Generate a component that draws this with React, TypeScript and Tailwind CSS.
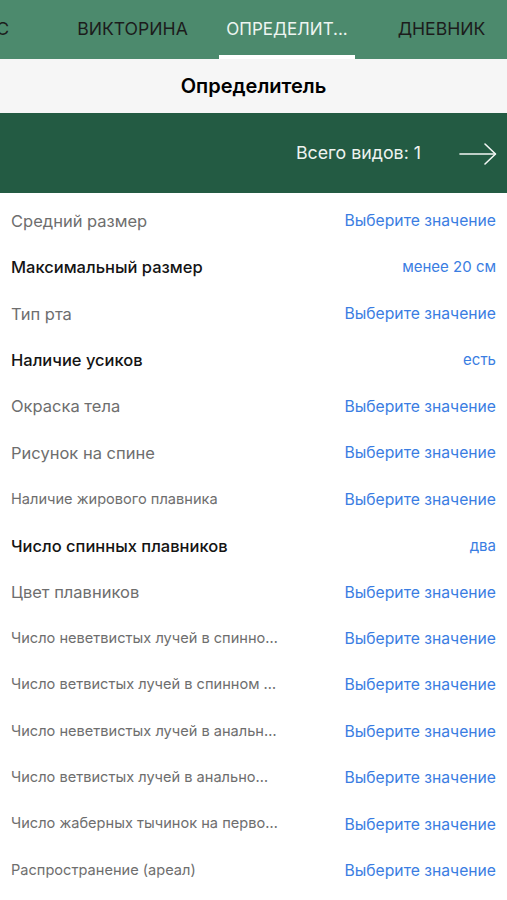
import React from "react";

type Row = { label: string; value: string; kind: "gray" | "black" | "small" };

const rows: Row[] = [
  { label: "Средний размер", value: "Выберите значение", kind: "gray" },
  { label: "Максимальный размер", value: "менее 20 см", kind: "black" },
  { label: "Тип рта", value: "Выберите значение", kind: "gray" },
  { label: "Наличие усиков", value: "есть", kind: "black" },
  { label: "Окраска тела", value: "Выберите значение", kind: "gray" },
  { label: "Рисунок на спине", value: "Выберите значение", kind: "gray" },
  { label: "Наличие жирового плавника", value: "Выберите значение", kind: "small" },
  { label: "Число спинных плавников", value: "два", kind: "black" },
  { label: "Цвет плавников", value: "Выберите значение", kind: "gray" },
  { label: "Число неветвистых лучей в спинном плавнике", value: "Выберите значение", kind: "small" },
  { label: "Число ветвистых лучей в спинном плавнике", value: "Выберите значение", kind: "small" },
  { label: "Число неветвистых лучей в анальном плавнике", value: "Выберите значение", kind: "small" },
  { label: "Число ветвистых лучей в анальном плавнике", value: "Выберите значение", kind: "small" },
  { label: "Число жаберных тычинок на первой жаберной дуге", value: "Выберите значение", kind: "small" },
  { label: "Распространение (ареал)", value: "Выберите значение", kind: "small" },
];

const tabs = ["КЛАСС", "ВИКТОРИНА", "ОПРЕДЕЛИТ...", "ДНЕВНИК"];

export default function App() {
  return (
    <div
      className="w-[507px] h-[900px] bg-white overflow-hidden"
      style={{ fontFamily: "Inter, 'Noto Sans', sans-serif" }}
    >
      {/* Tab bar */}
      <div className="h-[59px] bg-[#4c8a6d] overflow-hidden">
        <div className="flex ml-[-90px] gap-[18.5px] h-full">
          {tabs.map((t, i) => (
            <div key={i} className="relative w-[136px] shrink-0 h-full flex items-center justify-center">
              <span
                className={
                  "whitespace-nowrap " +
                  (i === 2 ? "text-[17px] text-[#eef5f1]" : "text-[17.6px] text-[#1c1c1c]")
                }
              >
                {t}
              </span>
              {i === 2 && <div className="absolute left-0 right-0 bottom-0 h-[4px] bg-white" />}
            </div>
          ))}
        </div>
      </div>

      {/* Title bar */}
      <div className="h-[54px] bg-[#f6f6f6] flex items-center justify-center">
        <span className="text-[20px] font-semibold text-black">Определитель</span>
      </div>

      {/* Banner */}
      <div className="h-[80px] bg-[#235b43] flex items-center justify-end pr-[10px]">
        <span className="text-[17.8px] text-[#eef3f0] mr-[38px]">Всего видов: 1</span>
        <svg width="38" height="24" viewBox="0 0 38 24" fill="none" className="mt-[1px]">
          <path d="M1 12 H36" stroke="#f2f6f4" strokeWidth="1.6" strokeLinecap="round" />
          <path d="M26 2 L36.5 12 L26 22" stroke="#f2f6f4" strokeWidth="1.6" strokeLinecap="round" strokeLinejoin="round" />
        </svg>
      </div>

      {/* Rows */}
      <div className="pt-[5px]">
        {rows.map((r, i) => (
          <div key={i} className="h-[46.4px] flex items-center justify-between px-[11px]">
            <span
              className={
                "truncate max-w-[267px] " +
                (r.kind === "black"
                  ? "text-[16.5px] font-medium text-[#141414]"
                  : r.kind === "gray"
                  ? "text-[16.5px] text-[#6e6e6e]"
                  : "text-[14.6px] text-[#6e6e6e]")
              }
            >
              {r.label}
            </span>
            <span
              className={
                "text-[#3a7de2] whitespace-nowrap " +
                (r.value === "Выберите значение" ? "text-[15.7px]" : "text-[15px]")
              }
            >
              {r.value}
            </span>
          </div>
        ))}
      </div>
    </div>
  );
}
